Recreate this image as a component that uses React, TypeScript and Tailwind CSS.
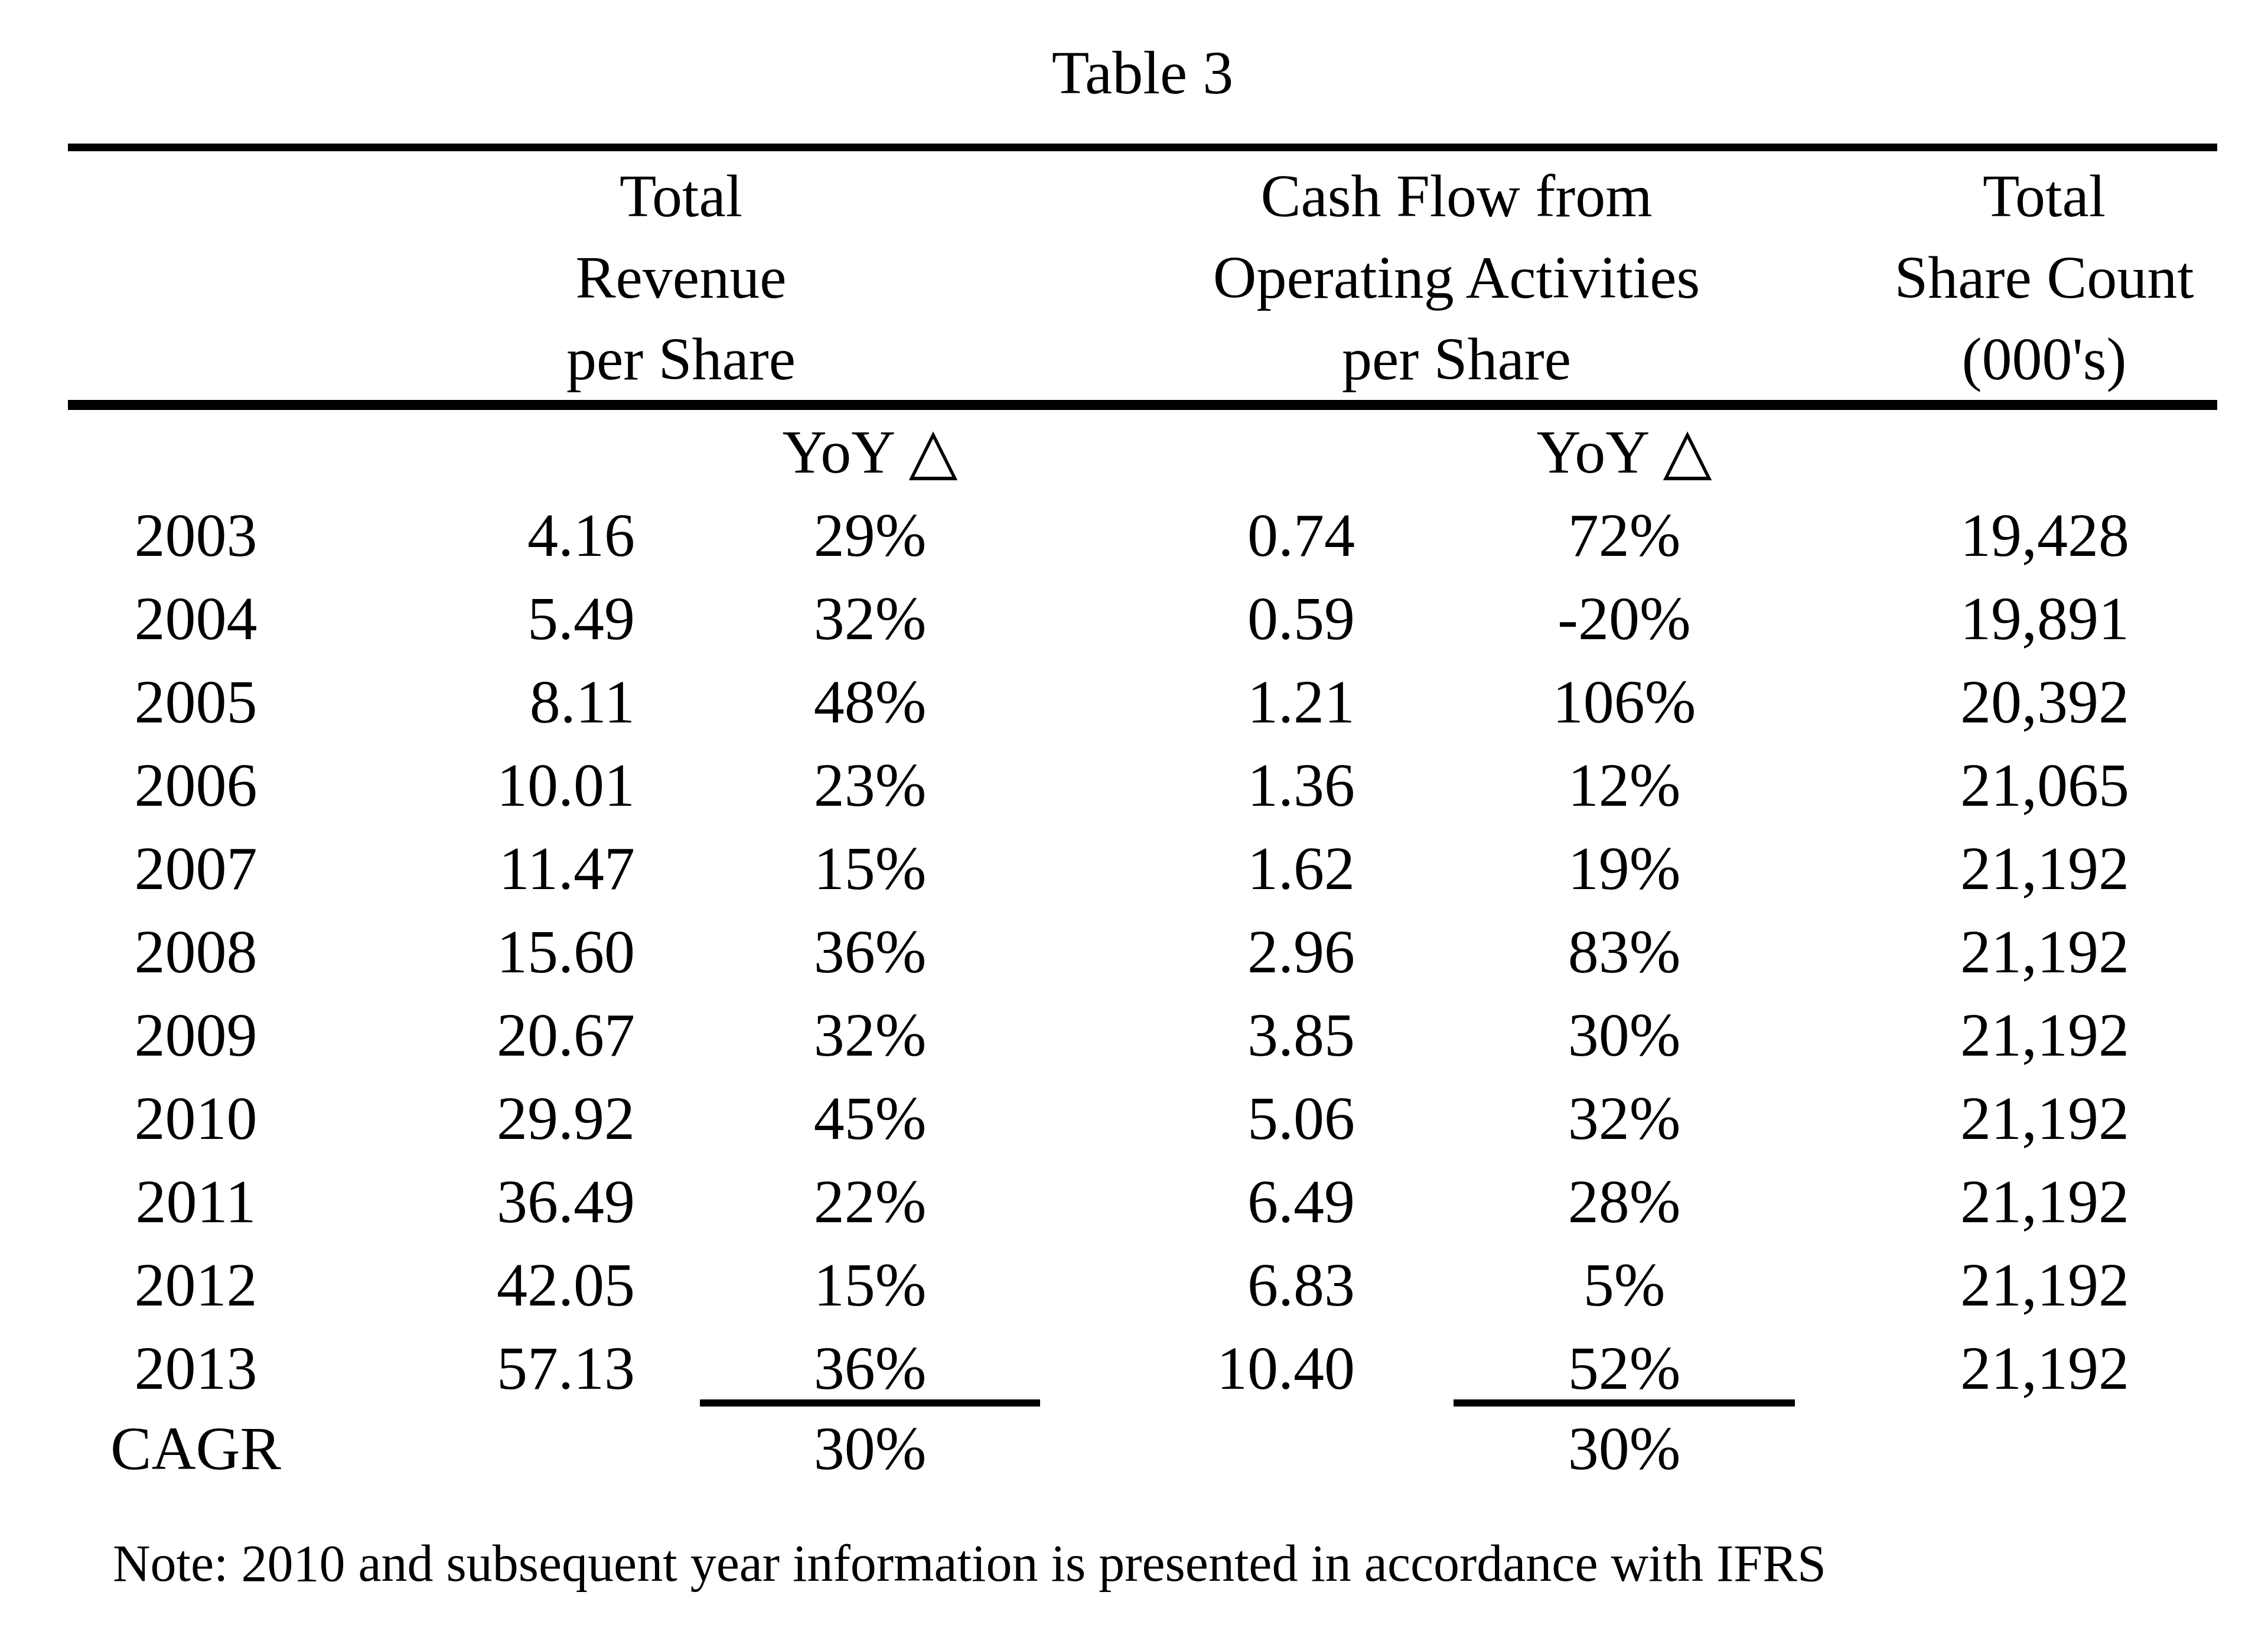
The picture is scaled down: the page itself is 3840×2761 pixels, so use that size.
import React from 'react';

type Row = [string, string, string, string, string, string];

const rows: Row[] = [
    ['2003', '4.16', '29%', '0.74', '72%', '19,428'],
    ['2004', '5.49', '32%', '0.59', '-20%', '19,891'],
    ['2005', '8.11', '48%', '1.21', '106%', '20,392'],
    ['2006', '10.01', '23%', '1.36', '12%', '21,065'],
    ['2007', '11.47', '15%', '1.62', '19%', '21,192'],
    ['2008', '15.60', '36%', '2.96', '83%', '21,192'],
    ['2009', '20.67', '32%', '3.85', '30%', '21,192'],
    ['2010', '29.92', '45%', '5.06', '32%', '21,192'],
    ['2011', '36.49', '22%', '6.49', '28%', '21,192'],
    ['2012', '42.05', '15%', '6.83', '5%', '21,192'],
    ['2013', '57.13', '36%', '10.40', '52%', '21,192'],
];

const DataRow = ({ row, last }: { row: Row; last?: boolean }) => (
    <div className={`grid grid-cols-[433px_637px_576px_700px_578px_715px] leading-[141px] ${last ? 'grid-rows-[136px] h-[136px]' : 'grid-rows-[141px] h-[141px]'}`}>
        <div className="text-center">{row[0]}</div>
        <div className="text-right pr-[110px]">{row[1]}</div>
        <div className={`text-center ${last ? 'border-b-[12px] border-black' : ''}`}>{row[2]}</div>
        <div className="text-right pr-[167px]">{row[3]}</div>
        <div className={`text-center ${last ? 'border-b-[12px] border-black' : ''}`}>{row[4]}</div>
        <div className="text-right pr-[149px]">{row[5]}</div>
    </div>
);

const Yoy = () => (
    <span>
        YoY <span className="font-['DejaVu_Sans',sans-serif] text-[108px] leading-none">△</span>
    </span>
);

export default function App() {
    return (
        <div className="w-[3840px] h-[2761px] bg-white text-black font-['Liberation_Serif','Times_New_Roman',serif] pl-[115px] pt-[52px]">
            <div className="w-[3639px]">
                <div className="text-center text-[104px] leading-[141px]">Table 3</div>

                <div className="mt-[50px] border-t-[13px] border-black" />

                {/* column headings */}
                <div className="grid grid-cols-[485px_1106px_1520px_470px_1fr] text-[102px] leading-[138px] pt-[7px] whitespace-nowrap">
                    <div />
                    <div className="flex flex-col items-center">
                        <span>Total</span>
                        <span>Revenue</span>
                        <span>per Share</span>
                    </div>
                    <div className="flex flex-col items-center">
                        <span>Cash Flow from</span>
                        <span>Operating Activities</span>
                        <span>per Share</span>
                    </div>
                    <div className="flex flex-col items-center">
                        <span>Total</span>
                        <span>Share Count</span>
                        <span>(000's)</span>
                    </div>
                    <div />
                </div>

                <div className="border-t-[17px] border-black" />

                <div className="text-[104px]">
                    <div className="grid grid-cols-[433px_637px_576px_700px_578px_715px] grid-rows-[141px] leading-[141px] h-[141px]">
                        <div />
                        <div />
                        <div className="text-center"><Yoy /></div>
                        <div />
                        <div className="text-center"><Yoy /></div>
                        <div />
                    </div>
                    {rows.map((r, i) => (
                        <DataRow key={r[0]} row={r} last={i === rows.length - 1} />
                    ))}
                    <div className="grid grid-cols-[433px_637px_576px_700px_578px_715px] grid-rows-[141px] leading-[141px] h-[141px]">
                        <div className="text-center">CAGR</div>
                        <div />
                        <div className="text-center">30%</div>
                        <div />
                        <div className="text-center">30%</div>
                        <div />
                    </div>
                </div>

                <p className="mt-[75px] pl-[76px] text-[88px] leading-[100px] whitespace-nowrap">
                    Note: 2010 and subsequent year information is presented in accordance with IFRS
                </p>
            </div>
        </div>
    );
}
